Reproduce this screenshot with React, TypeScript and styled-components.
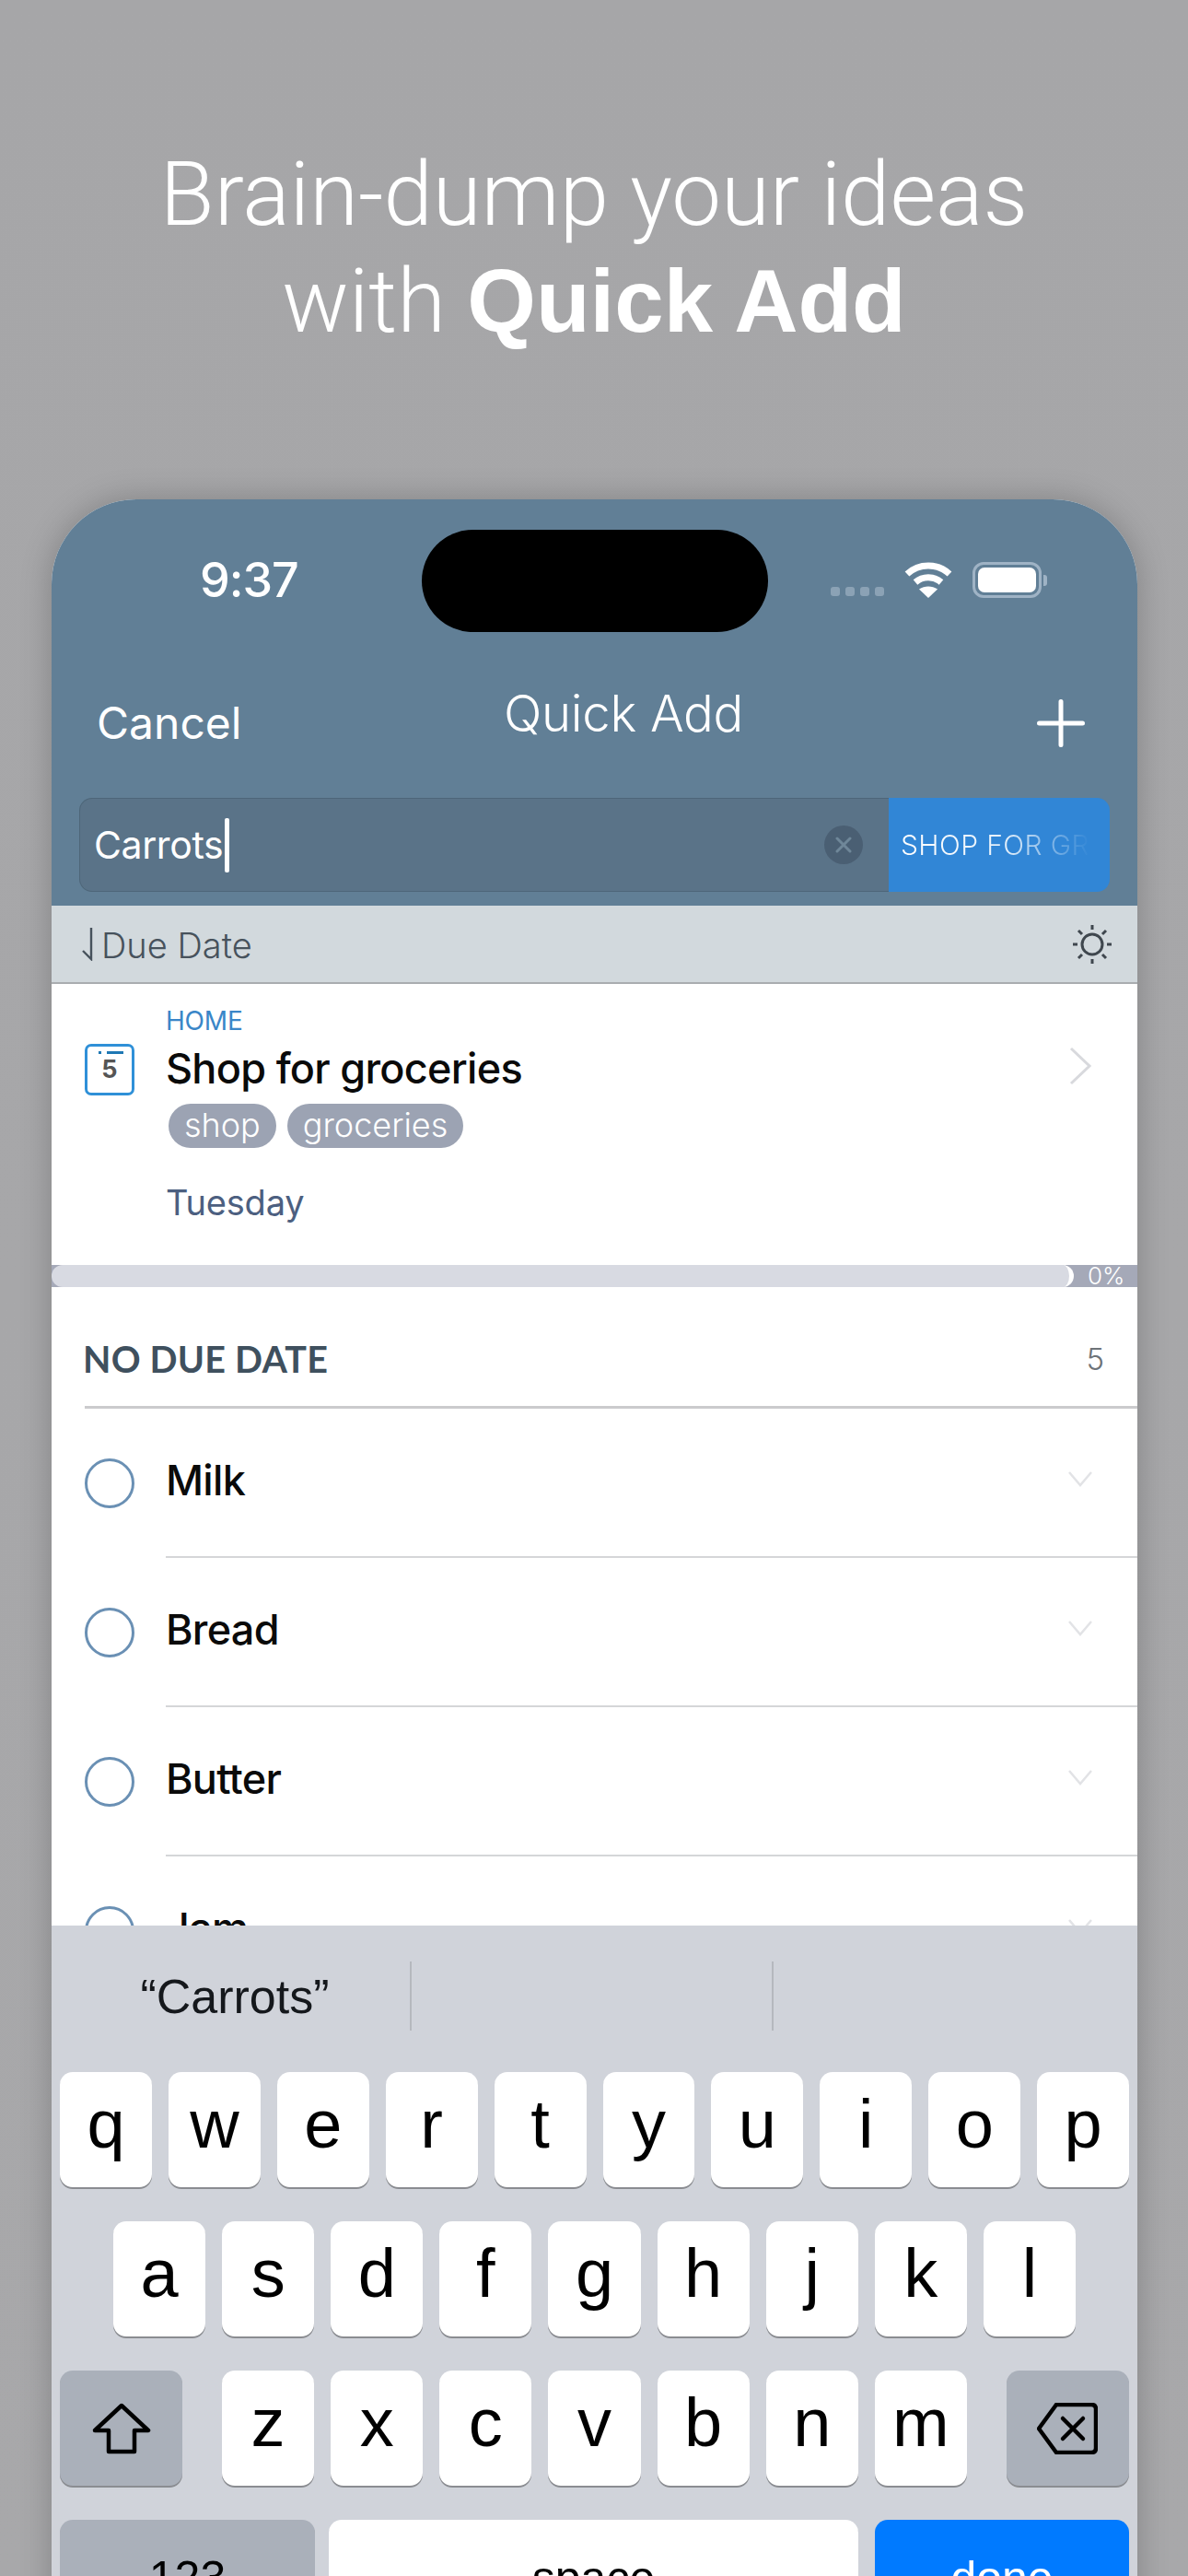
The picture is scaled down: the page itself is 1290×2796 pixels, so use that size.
import React from "react";
import styled, { createGlobalStyle } from "styled-components";

const Global = createGlobalStyle`
  html, body { margin: 0; padding: 0; }
  body { width: 1290px; height: 2796px; overflow: hidden; background: #a6a7a9; font-family: Inter, "Liberation Sans", sans-serif; }
  * { box-sizing: border-box; }
`;

const Page = styled.div`
  width: 1290px;
  height: 2796px;
  overflow: hidden;
  background: linear-gradient(#a6a6a8, #a8a8aa);
`;
const Hero = styled.h1`
  margin: 0;
  height: 542px;
  padding-top: 153px;
  text-align: center;
  color: #fff;
  font-family: Roboto, "Liberation Sans", sans-serif;
  font-weight: 300;
  font-size: 96px;
  line-height: 116px;
  b { font-family: "Liberation Sans", sans-serif; font-weight: 700; font-size: 96px; }
`;
const Phone = styled.div`
  width: 1179px;
  margin-left: 56px;
  border-radius: 92px 92px 0 0;
  overflow: hidden;
  background: #fff;
  box-shadow: 0 0 34px rgba(0, 0, 0, 0.22);
`;
const Header = styled.header`
  height: 441px;
  background: #617f96;
  padding-top: 33px;
`;
const StatusRow = styled.div`
  display: flex;
  align-items: center;
  height: 111px;
`;
const Clock = styled.div`
  width: 402px;
  padding-left: 161px;
  margin-top: -2px;
  color: #fff;
  font-size: 52px;
  font-weight: 500;
  letter-spacing: -1px;
`;
const Island = styled.div`
  width: 376px;
  height: 111px;
  background: #000;
  border-radius: 56px;
`;
const StatusIcons = styled.div`
  display: flex;
  align-items: center;
  margin-left: 68px;
  gap: 22px;
  margin-top: -2px;
`;
const SignalDots = styled.div`
  display: flex;
  gap: 6px;
  margin-top: 24px;
`;
const Dot = styled.span`
  width: 10px;
  height: 10px;
  border-radius: 3px;
  background: #8ba2b5;
`;
const Battery = styled.div`
  display: flex;
  align-items: center;
  gap: 2px;
`;
const BatteryShell = styled.div`
  width: 75px;
  height: 39px;
  border: 3px solid #9fb3c5;
  border-radius: 12px;
  padding: 3px;
`;
const BatteryFill = styled.div`
  width: 100%;
  height: 100%;
  background: #fff;
  border-radius: 7px;
`;
const BatteryNub = styled.div`
  width: 4px;
  height: 12px;
  background: #9fb3c5;
  border-radius: 0 3px 3px 0;
`;
const Nav = styled.nav`
  display: flex;
  align-items: flex-start;
  height: 112px;
  margin-top: 68px;
  padding: 0 57px 0 49px;
  color: #fff;
`;
const Cancel = styled.div`
  margin-top: 1px;
  font-size: 48px;
  line-height: 60px;
  width: 155px;
  white-space: nowrap;
`;
const NavTitle = styled.div`
  margin-left: 287px;
  margin-top: -12px;
  font-size: 54.5px;
  font-weight: 300;
  line-height: 64px;
  white-space: nowrap;
  letter-spacing: -0.3px;
`;
const PlusBtn = styled.div`
  margin-left: auto;
  margin-top: 5px;
  display: flex;
`;
const Search = styled.div`
  display: flex;
  height: 102px;
  margin: 0 30px;
`;
const Field = styled.div`
  flex: 1;
  display: flex;
  align-items: center;
  background: #5a7388;
  border: 1px solid #4e6679;
  border-right: none;
  border-radius: 14px 0 0 14px;
  padding: 0 28px 0 15px;
  color: #fff;
  font-size: 41px;
  letter-spacing: -0.4px;
`;
const Caret = styled.span`
  width: 5px;
  height: 59px;
  margin-left: 2px;
  border-radius: 2px;
  background: #fff;
`;
const Clear = styled.div`
  margin-left: auto;
  width: 42px;
  height: 42px;
  border-radius: 50%;
  background: #4a5f73;
  display: flex;
  align-items: center;
  justify-content: center;
`;
const Suggest = styled.div`
  width: 240px;
  display: flex;
  align-items: center;
  padding-left: 13px;
  background: #3186d6;
  border-radius: 0 14px 14px 0;
  font-size: 30px;
  letter-spacing: 0.4px;
  font-weight: 300;
  white-space: nowrap;
  overflow: hidden;
`;
const SuggestText = styled.span`
  background: linear-gradient(90deg, #fff 0, #e6f1fb 55%, #3186d6 100%);
  -webkit-background-clip: text;
  background-clip: text;
  color: transparent;
`;
const SortBar = styled.div`
  display: flex;
  align-items: center;
  height: 85px;
  padding: 0 27px 0 32px;
  background: #d2d9dd;
  border-bottom: 2px solid #a9adb0;
  color: #47525c;
  font-size: 38px;
  font-weight: 300;
`;
const SortLabel = styled.span`
  margin-left: 8px;
  margin-top: 3px;
`;
const SunWrap = styled.div`
  margin-left: auto;
  display: flex;
`;
const Content = styled.div`
  height: 1022px;
  overflow: hidden;
  background: #fff;
`;
const TaskCard = styled.div`
  display: flex;
  height: 305px;
  padding: 25px 49px 0 36px;
`;
const CalBadge = styled.div`
  flex: none;
  width: 54px;
  height: 56px;
  margin-top: 40px;
  border: 3px solid #2f90d8;
  border-radius: 7px;
  display: flex;
  flex-direction: column;
  align-items: center;
`;
const CalMarks = styled.div`
  display: flex;
  gap: 6px;
  margin-top: 5px;
  margin-left: 2px;
`;
const CalMark = styled.span<{ $w: number }>`
  height: 3px;
  width: ${(p) => p.$w}px;
  background: #1f78b4;
`;
const CalDay = styled.span`
  font-size: 27px;
  line-height: 30px;
  font-weight: 700;
  color: #555;
  margin-top: 2px;
`;
const TaskBody = styled.div`
  margin-left: 34px;
  flex: 1;
`;
const Area = styled.div`
  color: #3a86c8;
  font-size: 28px;
  line-height: 30px;
  letter-spacing: -0.2px;
`;
const TaskTitle = styled.div`
  margin-top: 10px;
  color: #0a0a0a;
  font-size: 45px;
  font-weight: 500;
  letter-spacing: -0.7px;
  line-height: 54px;
  white-space: nowrap;
`;
const Tags = styled.div`
  display: flex;
  gap: 12px;
  margin: 11px 0 0 3px;
`;
const Tag = styled.span`
  height: 48px;
  padding: 0 17px;
  border-radius: 24px;
  background: #9ca3b3;
  color: #fff;
  font-size: 36px;
  font-weight: 300;
  line-height: 46px;
`;
const When = styled.div`
  margin-top: 35px;
  color: #4c5f80;
  font-size: 38px;
  letter-spacing: -0.2px;
  line-height: 48px;
`;
const RightChevron = styled.div`
  margin-top: 43px;
  display: flex;
`;
const Progress = styled.div`
  display: flex;
  height: 24px;
  background: #a5a9b8;
`;
const ProgressFill = styled.div`
  width: 1110px;
  background: #d8dae2;
  border-radius: 12px;
  border-right: 5px solid #fff;
`;
const ProgressLabel = styled.span`
  margin-left: 15px;
  color: #fff;
  font-size: 26px;
  line-height: 24px;
  font-weight: 300;
`;
const SectionHead = styled.div`
  display: flex;
  align-items: center;
  justify-content: space-between;
  height: 129px;
  margin-left: 34px;
  margin-right: 36px;
  padding-top: 26px;
`;
const SectionTitle = styled.span`
  color: #3f505e;
  font-family: Lato, Inter, sans-serif;
  font-size: 39.5px;
  font-weight: 700;
  letter-spacing: 0.2px;
`;
const SectionCount = styled.span`
  color: #6d7378;
  font-size: 33px;
  font-weight: 300;
`;
const SectionRule = styled.div`
  height: 3px;
  margin-left: 36px;
  background: #cbcbcd;
`;
const TaskRow = styled.div`
  display: flex;
  height: 160px;
  padding: 54px 49px 0 36px;
`;
const Circle = styled.div`
  flex: none;
  width: 54px;
  height: 54px;
  border: 3px solid #6a90b4;
  border-radius: 50%;
`;
const RowInner = styled.div`
  flex: 1;
  display: flex;
  justify-content: space-between;
  margin-left: 34px;
`;
const RowName = styled.div`
  margin-top: -3px;
  color: #0a0a0a;
  font-size: 45px;
  font-weight: 500;
  letter-spacing: -0.7px;
  line-height: 54px;
`;
const RowChevron = styled.div`
  margin-top: 14px;
  display: flex;
`;
const RowRule = styled.div`
  height: 2px;
  margin-left: 124px;
  background: #d5d6d8;
`;
const Keyboard = styled.div`
  height: 800px;
  background: #d0d3da;
  padding: 0 9px;
`;
const Suggestions = styled.div`
  display: grid;
  grid-template-columns: 382px 393px 1fr;
  height: 159px;
  padding-top: 39px;
  align-items: start;
`;
const Prediction = styled.div<{ $line?: boolean }>`
  height: 75px;
  display: flex;
  align-items: center;
  justify-content: center;
  color: #15181c;
  font-family: "Liberation Sans", sans-serif;
  font-size: 52px;
  border-right: ${(p) => (p.$line ? "2px solid #b5b8be" : "none")};
`;
const KeyRow = styled.div<{ $inset?: number }>`
  display: flex;
  gap: 18px;
  height: 127px;
  margin-bottom: 35px;
  padding: 0 ${(p) => p.$inset ?? 0}px;
`;
const Key = styled.div<{ $width?: number; $tone?: "white" | "grey" | "blue"; $size?: number }>`
  flex: ${(p) => (p.$width ? `0 0 ${p.$width}px` : "1 1 0")};
  display: flex;
  align-items: center;
  justify-content: center;
  height: 125px;
  padding-bottom: ${(p) => (p.$size ? 0 : 12)}px;
  border-radius: 14px;
  background: ${(p) => (p.$tone === "grey" ? "#aab0ba" : p.$tone === "blue" ? "#007aff" : "#fff")};
  color: ${(p) => (p.$tone === "blue" ? "#fff" : "#000")};
  box-shadow: 0 2px 0 #8a8c91;
  font-family: "Liberation Sans", sans-serif;
  font-size: ${(p) => p.$size ?? 74}px;
`;
const SpaceKey = styled(Key)`
  margin-left: -3px;
`;
const KeySpacer = styled.div<{ $width: number }>`
  flex: 0 0 ${(p) => p.$width}px;
`;

const Wifi = () => (
  <svg width="52" height="40" viewBox="0 0 52 40" fill="none" stroke="#fff" strokeWidth="7">
    <path d="M3 13 C16 1 36 1 49 13" />
    <path d="M12 22 C20 15 32 15 40 22" />
    <path d="M26 39 L16 29.5 C22 25.5 30 25.5 36 29.5 Z" fill="#fff" stroke="none" />
  </svg>
);
const Plus = () => (
  <svg width="52" height="52" viewBox="0 0 52 52" stroke="#fff" strokeWidth="5" strokeLinecap="round">
    <path d="M26 2.5V49.5M2.5 26H49.5" />
  </svg>
);
const SmallX = () => (
  <svg width="18" height="18" viewBox="0 0 18 18" stroke="#6f8799" strokeWidth="3" strokeLinecap="round">
    <path d="M2 2L16 16M16 2L2 16" />
  </svg>
);
const SortArrow = () => (
  <svg width="14" height="36" viewBox="0 0 14 36" fill="none" stroke="#47525c" strokeWidth="2.4">
    <path d="M11 0V34L2 25" />
  </svg>
);
const Sun = () => (
  <svg width="44" height="44" viewBox="0 0 44 44" fill="none" stroke="#3f474e" strokeWidth="3">
    <circle cx="22" cy="22" r="11" />
    <path d="M22 1V6M22 38V43M1 22H6M38 22H43M7 7L11 11M33 33L37 37M37 7L33 11M11 33L7 37" />
  </svg>
);
const ChevronRight = () => (
  <svg width="26" height="42" viewBox="0 0 26 42" fill="none" stroke="#d8d9dd" strokeWidth="3">
    <path d="M3 2L23 21L3 40" />
  </svg>
);
const ChevronDown = () => (
  <svg width="26" height="17" viewBox="0 0 26 17" fill="none" stroke="#e2e3e6" strokeWidth="2.5">
    <path d="M1 1L13 15L25 1" />
  </svg>
);
const Shift = () => (
  <svg width="64" height="56" viewBox="0 0 64 56" fill="none" stroke="#000" strokeWidth="4.5" strokeLinejoin="round">
    <path d="M32 3L61 30H46V53H18V30H3Z" />
  </svg>
);
const Backspace = () => (
  <svg width="66" height="56" viewBox="0 0 66 56" fill="none" stroke="#000" strokeWidth="4.5" strokeLinejoin="round" strokeLinecap="round">
    <path d="M21 2H59Q64 2 64 7V49Q64 54 59 54H21L2 28Z" />
    <path d="M28 17L50 39M50 17L28 39" />
  </svg>
);

const rows = ["Milk", "Bread", "Butter", "Jam"];

export default function App() {
  return (
    <Page>
      <Global />
      <Hero>
        Brain-dump your ideas
        <br />
        with <b>Quick Add</b>
      </Hero>
      <Phone>
        <Header>
          <StatusRow>
            <Clock>9:37</Clock>
            <Island />
            <StatusIcons>
              <SignalDots>
                <Dot />
                <Dot />
                <Dot />
                <Dot />
              </SignalDots>
              <Wifi />
              <Battery>
                <BatteryShell>
                  <BatteryFill />
                </BatteryShell>
                <BatteryNub />
              </Battery>
            </StatusIcons>
          </StatusRow>
          <Nav>
            <Cancel>Cancel</Cancel>
            <NavTitle>Quick Add</NavTitle>
            <PlusBtn>
              <Plus />
            </PlusBtn>
          </Nav>
          <Search>
            <Field>
              Carrots
              <Caret />
              <Clear>
                <SmallX />
              </Clear>
            </Field>
            <Suggest>
              <SuggestText>SHOP FOR GR</SuggestText>
            </Suggest>
          </Search>
        </Header>
        <SortBar>
          <SortArrow />
          <SortLabel>Due Date</SortLabel>
          <SunWrap>
            <Sun />
          </SunWrap>
        </SortBar>
        <Content>
          <TaskCard>
            <CalBadge>
              <CalMarks>
                <CalMark $w={3} />
                <CalMark $w={18} />
              </CalMarks>
              <CalDay>5</CalDay>
            </CalBadge>
            <TaskBody>
              <Area>HOME</Area>
              <TaskTitle>Shop for groceries</TaskTitle>
              <Tags>
                <Tag>shop</Tag>
                <Tag>groceries</Tag>
              </Tags>
              <When>Tuesday</When>
            </TaskBody>
            <RightChevron>
              <ChevronRight />
            </RightChevron>
          </TaskCard>
          <Progress>
            <ProgressFill />
            <ProgressLabel>0%</ProgressLabel>
          </Progress>
          <SectionHead>
            <SectionTitle>NO DUE DATE</SectionTitle>
            <SectionCount>5</SectionCount>
          </SectionHead>
          <SectionRule />
          {rows.map((name) => (
            <React.Fragment key={name}>
              <TaskRow>
                <Circle />
                <RowInner>
                  <RowName>{name}</RowName>
                  <RowChevron>
                    <ChevronDown />
                  </RowChevron>
                </RowInner>
              </TaskRow>
              <RowRule />
            </React.Fragment>
          ))}
        </Content>
        <Keyboard>
          <Suggestions>
            <Prediction $line>“Carrots”</Prediction>
            <Prediction $line />
            <Prediction />
          </Suggestions>
          <KeyRow>
            {"qwertyuiop".split("").map((k) => (
              <Key key={k}>{k}</Key>
            ))}
          </KeyRow>
          <KeyRow $inset={58}>
            {"asdfghjkl".split("").map((k) => (
              <Key key={k}>{k}</Key>
            ))}
          </KeyRow>
          <KeyRow>
            <Key $width={133} $tone="grey" $size={74}>
              <Shift />
            </Key>
            <KeySpacer $width={7} />
            {"zxcvbnm".split("").map((k) => (
              <Key key={k}>{k}</Key>
            ))}
            <KeySpacer $width={7} />
            <Key $width={133} $tone="grey" $size={74}>
              <Backspace />
            </Key>
          </KeyRow>
          <KeyRow>
            <Key $width={277} $tone="grey" $size={50}>
              123
            </Key>
            <SpaceKey $size={50}>space</SpaceKey>
            <Key $width={276} $tone="blue" $size={50}>
              done
            </Key>
          </KeyRow>
        </Keyboard>
      </Phone>
    </Page>
  );
}
